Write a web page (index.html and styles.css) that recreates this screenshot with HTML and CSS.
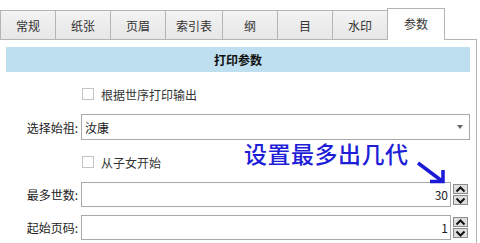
FILE: index.html
```html
<!DOCTYPE html>
<html lang="zh-CN">
<head>
  <meta charset="UTF-8" />
  <title>打印参数</title>
  <link rel="stylesheet" href="styles.css">
</head>
<body>

  <div class="tabs">
    <div class="tab">常规</div>
    <div class="tab">纸张</div>
    <div class="tab">页眉</div>
    <div class="tab wide">索引表</div>
    <div class="tab">纲</div>
    <div class="tab">目</div>
    <div class="tab">水印</div>
    <div class="tab active">参数</div>
  </div>

  <div class="panel">
    <div class="panel-head">打印参数</div>

    <label class="check-row first">
      <span class="box"></span>根据世序打印输出
    </label>

    <div class="field-row select-row">
      <span class="label">选择始祖:</span>
      <div class="select">
        <span>汝康</span>
        <span class="caret"></span>
      </div>
    </div>

    <label class="check-row second">
      <span class="box"></span>从子女开始
    </label>

    <div class="field-row spin-row">
      <span class="label">最多世数:</span>
      <div class="input">30</div>
      <div class="spinner">
        <div class="spin-btn"><svg width="11" height="7" viewBox="0 0 11 7"><polyline points="1.5,5.5 5.5,1.5 9.5,5.5" fill="none" stroke="#111" stroke-width="2"/></svg></div>
        <div class="spin-btn"><svg width="11" height="7" viewBox="0 0 11 7"><polyline points="1.5,1.5 5.5,5.5 9.5,1.5" fill="none" stroke="#111" stroke-width="2"/></svg></div>
      </div>
    </div>

    <div class="field-row spin-row last">
      <span class="label">起始页码:</span>
      <div class="input">1</div>
      <div class="spinner">
        <div class="spin-btn"><svg width="11" height="7" viewBox="0 0 11 7"><polyline points="1.5,5.5 5.5,1.5 9.5,5.5" fill="none" stroke="#111" stroke-width="2"/></svg></div>
        <div class="spin-btn"><svg width="11" height="7" viewBox="0 0 11 7"><polyline points="1.5,1.5 5.5,5.5 9.5,1.5" fill="none" stroke="#111" stroke-width="2"/></svg></div>
      </div>
    </div>

    <!-- annotation drawn over the form -->
    <div class="note">设置最多出几代</div>
    <svg class="note-arrow" width="40" height="30" viewBox="0 0 40 30">
      <line x1="3" y1="3" x2="27" y2="21" stroke="#1a1ad6" stroke-width="3.5"/>
      <polyline points="15,21.5 28,21.5 28,10" fill="none" stroke="#1a1ad6" stroke-width="3.5"/>
    </svg>
  </div>

</body>
</html>
```

FILE: styles.css
```css
body {
  margin: 0;
  font-family: "Noto Sans CJK SC", "Noto Sans", sans-serif;
  font-size: 12px;
  color: #222;
  background: #fff;
  width: 480px;
  height: 243px;
  overflow: hidden;
}

.tabs {
  display: flex;
  align-items: flex-end;
  padding-top: 8px;
  height: 31px;
  position: relative;
  z-index: 1;
}

.tab {
  flex: 0 0 56px;
  height: 29px;
  box-sizing: border-box;
  margin-right: -1px;
  border: 1px solid #b4b4b4;
  border-bottom: none;
  background: linear-gradient(#f3f3f3, #e6e6e6);
  display: flex;
  align-items: center;
  justify-content: center;
  color: #333;
}

.tab.wide {
  flex-basis: 58px;
}

.tab.active {
  flex-basis: 58px;
  height: 32px;
  margin-bottom: -1px;
  background: #fff;
  padding-bottom: 2px;
}

.panel {
  position: relative;
  width: 476px;
  height: 204px;
  border-top: 1px solid #b4b4b4;
  border-right: 1px solid #b4b4b4;
}

.panel-head {
  margin: 7px 6px 0 6px;
  height: 25px;
  background: #bedff0;
  display: flex;
  align-items: center;
  justify-content: center;
  font-weight: bold;
  color: #111;
}

.check-row {
  display: flex;
  align-items: center;
  height: 14px;
  padding-left: 82px;
  gap: 7px;
  color: #333;
}

.check-row.first {
  margin-top: 15px;
}

.check-row.second {
  margin-top: 15px;
}

.box {
  width: 10px;
  height: 10px;
  border: 1px solid #c4c4c4;
  background: #fff;
}

.field-row {
  display: flex;
  align-items: center;
}

.label {
  width: 78px;
  padding-right: 3px;
  text-align: right;
  color: #222;
}

.select-row {
  margin-top: 13px;
  height: 26px;
}

.select {
  width: 389px;
  height: 26px;
  box-sizing: border-box;
  border: 1px solid #a9a9a9;
  display: flex;
  align-items: center;
  justify-content: space-between;
  padding: 0 6px 0 3px;
  color: #222;
}

.caret {
  width: 0;
  height: 0;
  border-left: 3px solid transparent;
  border-right: 3px solid transparent;
  border-top: 4px solid #666;
}

.spin-row {
  margin-top: 13px;
  height: 25px;
}

.spin-row.last {
  margin-top: 8px;
}

.input {
  width: 370px;
  height: 25px;
  box-sizing: border-box;
  border: 1px solid #a9a9a9;
  display: flex;
  align-items: center;
  justify-content: flex-end;
  padding-right: 2px;
  color: #222;
}

.spinner {
  margin-left: 2px;
  display: flex;
  flex-direction: column;
  gap: 1px;
}

.spin-btn {
  width: 15px;
  height: 10px;
  box-sizing: border-box;
  border: 1px solid #8c8c8c;
  background: #dedede;
  display: flex;
  align-items: center;
  justify-content: center;
}

.note {
  position: absolute;
  left: 244px;
  top: 98px;
  font-size: 23px;
  font-weight: 500;
  color: #1e1ed8;
  letter-spacing: 0.5px;
  line-height: 30px;
}

.note-arrow {
  position: absolute;
  left: 415px;
  top: 120px;
}
```
